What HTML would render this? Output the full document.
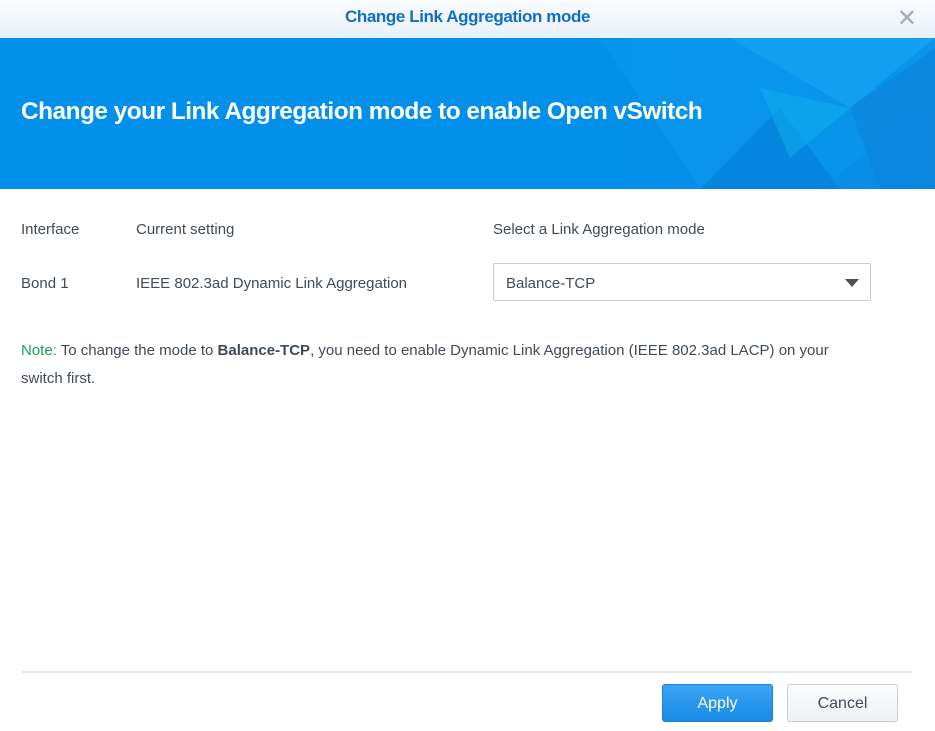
<!DOCTYPE html>
<html><head><meta charset="utf-8"><style>
*{margin:0;padding:0;box-sizing:border-box}
body{width:935px;height:731px;background:#fff;font-family:"Liberation Sans",sans-serif;position:relative;overflow:hidden;color:#414b55}
.top{position:absolute;left:0;top:0;width:935px;height:38px;background:linear-gradient(#fafcfe,#e8f1f9)}
.top .t{position:absolute;left:0;width:935px;top:7px;text-align:center;color:#0f6fc6;font-size:17px;font-weight:bold;letter-spacing:-0.4px}
.x{position:absolute;right:18px;top:4px;color:#a6acb2;font-size:24px}
.ban{position:absolute;left:0;top:38px;width:935px;height:151px;background:linear-gradient(90deg,#0290ea 60%,#0a8ee4);overflow:hidden}
.ban h1{position:absolute;left:21px;top:60px;color:#fff;font-size:24.4px;font-weight:bold;letter-spacing:-0.5px}
.l{position:absolute;font-size:15px;color:#414b55}
.sel{position:absolute;left:493px;top:263px;width:378px;height:38px;border:1px solid #c8ced4;border-radius:2px}
.sel span{position:absolute;left:12px;top:11px;font-size:15px}
.sel i{position:absolute;right:11px;top:15px;border-left:7px solid transparent;border-right:7px solid transparent;border-top:8px solid #4a5058}
.note{position:absolute;left:21px;top:337px;width:845px;font-size:15px;line-height:28px}
.hr{position:absolute;left:21px;top:671px;width:891px;height:2px;background:#e4e7ea}
.btn{position:absolute;top:684px;height:38px;border-radius:3px;font-size:16px;text-align:center;line-height:38px}
</style></head><body>
<div class="top"><div class="t">Change Link Aggregation mode</div><div class="x">✕</div></div>
<div class="ban">
<svg width="935" height="151" style="position:absolute;left:0;top:0">
<polygon points="600,0 935,0 935,60 820,151 700,151" fill="#0a97ec" opacity=".7"/>
<polygon points="730,0 935,0 850,70" fill="#1aa6f2" opacity=".6"/>
<polygon points="850,70 935,10 935,151 880,151" fill="#0b86dc" opacity=".8"/>
<polygon points="700,151 780,70 840,151" fill="#0380da" opacity=".7"/>
<polygon points="760,50 850,70 790,120" fill="#14b0f0" opacity=".5"/>
</svg>
<h1>Change your Link Aggregation mode to enable Open vSwitch</h1></div>
<div class="l" style="left:21px;top:221px">Interface</div>
<div class="l" style="left:136px;top:221px">Current setting</div>
<div class="l" style="left:493px;top:221px">Select a Link Aggregation mode</div>
<div class="l" style="left:21px;top:275px">Bond 1</div>
<div class="l" style="left:136px;top:275px">IEEE 802.3ad Dynamic Link Aggregation</div>
<div class="sel"><span>Balance-TCP</span><i></i></div>
<div class="note"><span style="color:#1f9e57">Note:</span> To change the mode to <b>Balance-TCP</b>, you need to enable Dynamic Link Aggregation (IEEE 802.3ad LACP) on your switch first.</div>
<div class="hr"></div>
<div class="btn" style="left:662px;width:111px;background:linear-gradient(#3aa4f4,#1a8ae6);border:1px solid #1a80d8;color:#fff">Apply</div>
<div class="btn" style="left:787px;width:111px;background:linear-gradient(#fafcfd,#eef2f5);border:1px solid #c8ced4;color:#414b55">Cancel</div>
</body></html>
